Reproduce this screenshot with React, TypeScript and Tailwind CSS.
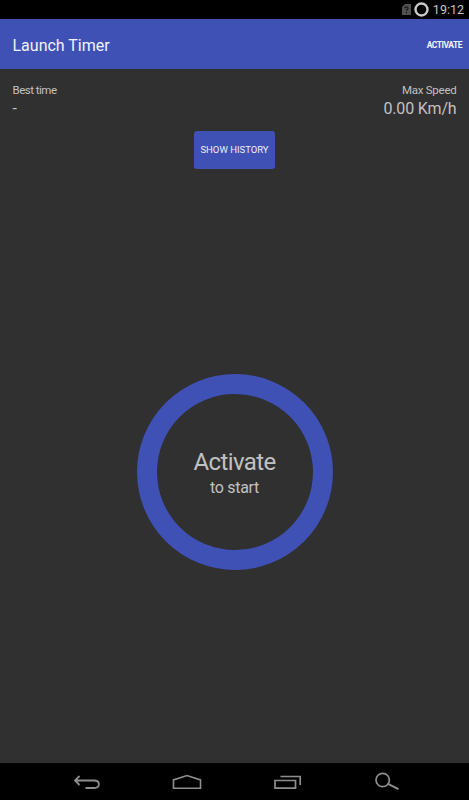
import React from "react";

function StatusBar() {
  return (
    <div className="flex h-[19px] shrink-0 items-center justify-end bg-black pr-[5px] text-[#c4c4c4]">
      <svg width="9" height="11" viewBox="0 0 9 11" className="mr-[3px]">
        <path d="M3 0H9V11H0V3Z" fill="#515151" />
        <path d="M3 4.2C3 2.6 6 2.6 6 4.3C6 5.5 4.5 5.4 4.5 7M4.5 8V9.2" fill="none" stroke="#101010" strokeWidth="1.1" />
      </svg>
      <svg width="15" height="15" viewBox="0 0 15 15" className="mr-[4px]">
        <circle cx="7.5" cy="7.5" r="6" fill="none" stroke="#cacaca" strokeWidth="2.4" />
      </svg>
      <span className="pt-px text-[12.5px] leading-none">19:12</span>
    </div>
  );
}

function Header() {
  return (
    <header className="flex h-[50px] shrink-0 items-center justify-between bg-[#3f51b5] pl-[12.5px] pr-[7px] pt-[2px] text-[#f2f3fa]">
      <h1 className="pt-[2px] text-[16px] leading-5">Launch Timer</h1>
      <button className="text-[8.5px] font-bold leading-none tracking-[-0.5px]">ACTIVATE</button>
    </header>
  );
}

function Stats() {
  return (
    <section className="flex justify-between px-[12.5px] pt-[13px]">
      <div>
        <p className="pb-px text-[11.5px] leading-4 tracking-[-0.5px]">Best time</p>
        <p className="text-[16px] leading-[20px]">-</p>
      </div>
      <div className="text-right">
        <p className="pb-px text-[11.5px] leading-4 tracking-[-0.25px]">Max Speed</p>
        <p className="text-[16px] leading-[20px] tracking-[-0.15px]">0.00 Km/h</p>
      </div>
    </section>
  );
}

function NavBar() {
  return (
    <nav className="flex h-[37px] shrink-0 items-center justify-center gap-[60px] bg-black pl-[4px]">
      <svg width="40" height="37" fill="none" stroke="#8e8e8e" strokeWidth="1.8">
        <path d="M12.5 13L8 17.5L12.5 22M8 17.5H27C33.5 17.5 33.5 25 27 25H18.5" />
      </svg>
      <svg width="40" height="37" fill="none" stroke="#8e8e8e" strokeWidth="1.6">
        <path d="M6.5 25.2V16.9L20 12.5L33.5 16.9V25.2Z" />
      </svg>
      <svg width="40" height="37" fill="none" stroke="#8e8e8e" strokeWidth="1.7">
        <path d="M8 17.5H28.5V25.2H8ZM13.5 13.5H33.2V22" />
      </svg>
      <svg width="40" height="37" fill="none" stroke="#8e8e8e" strokeWidth="1.7">
        <circle cx="15.7" cy="17" r="6.7" />
        <path d="M21 20.8L31.5 26.2" strokeWidth="2" />
      </svg>
    </nav>
  );
}

export default function App() {
  return (
    <div className="flex h-[800px] w-[469px] flex-col overflow-hidden bg-[#303030] font-['Roboto',sans-serif] text-[#c1c1c1]">
      <StatusBar />
      <Header />
      <main className="flex flex-1 flex-col items-center">
        <div className="w-full">
          <Stats />
        </div>
        <button className="mt-[12px] h-[38px] w-[81px] rounded-[3px] bg-[#3f51b5] text-[9.5px] leading-none text-[#eceef8]">
          SHOW HISTORY
        </button>
        <div className="mt-[205px] flex h-[196px] w-[196px] flex-col items-center justify-center rounded-full border-[20px] border-[#3f51b5] pt-[4px]">
          <p className="text-[24px] leading-7 tracking-[-0.6px]">Activate</p>
          <p className="text-[16px] leading-6 tracking-[-0.3px]">to start</p>
        </div>
      </main>
      <NavBar />
    </div>
  );
}
